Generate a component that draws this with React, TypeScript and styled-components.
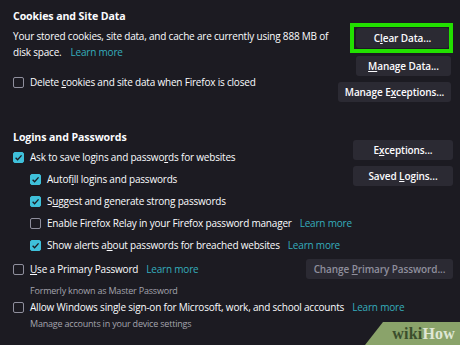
import styled, { createGlobalStyle } from 'styled-components';

const GlobalStyle = createGlobalStyle`
    body {
        margin: 0;
        background-color: #1c1b22;
        font-family: 'Open Sans', 'Noto Sans', sans-serif;
        color: #fbfbfe;
    }
`;

const Page = styled.div`
    position: relative;
    width: 460px;
    height: 345px;
    overflow: hidden;
    padding: 8px 9px 0 13px;
    box-sizing: border-box;
    font-size: 10px;
    letter-spacing: -0.2px;
`;

const Section = styled.div`
    display: flex;
    justify-content: space-between;
    align-items: flex-start;
`;

const Left = styled.div`
    flex: 1;
    min-width: 0;
    display: flex;
    flex-direction: column;
`;

const Title = styled.h2`
    margin: 0;
    font-size: 10.6px;
    font-weight: 700;
    letter-spacing: -0.1px;
    line-height: 17px;
`;

const Desc = styled.p`
    margin: 3px 0 0;
    width: 316px;
    line-height: 16px;
`;

const Link = styled.span<{ $gap?: number }>`
    color: #35adbd;
    margin-left: ${(p) => p.$gap ?? 2}px;
`;

const Buttons = styled.div<{ $top: number; $right?: number }>`
    flex: none;
    display: flex;
    flex-direction: column;
    align-items: flex-end;
    gap: 6px;
    padding-top: ${(p) => p.$top}px;
    margin-right: ${(p) => -(p.$right ?? 0)}px;
`;

const Button = styled.button<{ $w: number; $disabled?: boolean }>`
    width: ${(p) => p.$w}px;
    height: 20px;
    border: none;
    border-radius: 3px;
    background-color: #2b2a33;
    color: ${(p) => (p.$disabled ? '#8f8f9d' : '#fbfbfe')};
    font-family: inherit;
    font-size: 10px;
    font-weight: 600;
    letter-spacing: -0.1px;
    padding: 0;
    u {
        text-underline-offset: 1px;
    }
`;

const Highlight = styled.div`
    border: 4px solid #22e000;
    padding: 1px 0 1px 2px;
    margin-right: -2px;
`;

const Row = styled.label<{ $indent?: boolean; $h: number }>`
    display: flex;
    align-items: center;
    gap: 6px;
    height: ${(p) => p.$h}px;
    padding-left: ${(p) => (p.$indent ? 17 : 0)}px;
    white-space: nowrap;
`;

const Box = styled.span<{ $on?: boolean }>`
    flex: none;
    width: 9px;
    height: 9px;
    border: 1px solid ${(p) => (p.$on ? '#3fc0da' : '#8f8f9d')};
    border-radius: 2px;
    background-color: ${(p) => (p.$on ? '#3fc0da' : 'transparent')};
    display: flex;
    align-items: center;
    justify-content: center;
    svg {
        width: 9px;
        height: 9px;
    }
`;

const Sub = styled.div<{ $h: number }>`
    height: ${(p) => p.$h}px;
    display: flex;
    align-items: center;
    padding-left: 17px;
    color: #a3a3ad;
    font-size: 9px;
`;

const RowWithButton = styled.div`
    display: flex;
    justify-content: space-between;
    align-items: center;
    margin-right: -2px;
`;

const Watermark = styled.div`
    position: absolute;
    right: 0;
    bottom: 0;
    width: 95px;
    height: 23px;
    background-color: #8aa36a;
    clip-path: polygon(18px 0, 100% 0, 100% 100%, 0 100%);
    display: flex;
    align-items: center;
    justify-content: flex-end;
    padding-right: 5px;
    box-sizing: border-box;
    font-family: 'Liberation Serif', serif;
    font-weight: bold;
    font-size: 16px;
    letter-spacing: 0.2px;
`;

const Wiki = styled.span`
    color: #3b4e2c;
`;

const How = styled.span`
    color: #dfe7d5;
`;

function Check({ on }: { on?: boolean }) {
    return (
        <Box $on={on}>
            {on && (
                <svg viewBox="0 0 10 10">
                    <path d="M1.8 5.2 L4 7.4 L8.4 2.6" stroke="#1c1b22" strokeWidth="1.5" fill="none" />
                </svg>
            )}
        </Box>
    );
}

export default function App() {
    return (
        <Page>
            <GlobalStyle />
            <Section>
                <Left>
                    <Title>Cookies and Site Data</Title>
                    <Desc>
                        Your stored cookies, site data, and cache are currently using 888 MB of disk space.
                        <Link $gap={9}>Learn more</Link>
                    </Desc>
                    <Row $h={22} style={{ marginTop: 11 }}>
                        <Check />
                        <span>
                            Delete <u>c</u>ookies and site data when Firefox is closed
                        </span>
                    </Row>
                </Left>
                <Buttons $top={15}>
                    <Highlight>
                        <Button $w={93}>
                            C<u>l</u>ear Data...
                        </Button>
                    </Highlight>
                    <Button $w={95} style={{ marginTop: -3 }}>
                        <u>M</u>anage Data...
                    </Button>
                    <Button $w={113}>
                        Manage E<u>x</u>ceptions...
                    </Button>
                </Buttons>
            </Section>

            <Section style={{ marginTop: 27 }}>
                <Left>
                    <Title>Logins and Passwords</Title>
                    <Row $h={22}>
                        <Check on />
                        <span>
                            Ask to save logins and passwo<u>r</u>ds for websites
                        </span>
                    </Row>
                    <Row $h={22} $indent>
                        <Check on />
                        <span>
                            Autof<u>i</u>ll logins and passwords
                        </span>
                    </Row>
                    <Row $h={22} $indent>
                        <Check on />
                        <span>
                            S<u>u</u>ggest and generate strong passwords
                        </span>
                    </Row>
                    <Row $h={22} $indent>
                        <Check />
                        <span>Enable Firefox Relay in your Firefox password manager</span>
                        <Link>Learn more</Link>
                    </Row>
                    <Row $h={22} $indent>
                        <Check on />
                        <span>
                            Show alerts a<u>b</u>out passwords for breached websites
                        </span>
                        <Link>Learn more</Link>
                    </Row>
                </Left>
                <Buttons $top={11} $right={2}>
                    <Button $w={100}>
                        E<u>x</u>ceptions...
                    </Button>
                    <Button $w={100}>
                        Saved <u>L</u>ogins...
                    </Button>
                </Buttons>
            </Section>

            <RowWithButton>
                <Row $h={26}>
                    <Check />
                    <span>
                        <u>U</u>se a Primary Password
                    </span>
                    <Link>Learn more</Link>
                </Row>
                <Button $w={147} $disabled>
                    Change <u>P</u>rimary Password...
                </Button>
            </RowWithButton>
            <Sub $h={16}>Formerly known as Master Password</Sub>
            <Row $h={18}>
                <Check />
                <span>Allow Windows single sign-on for Microsoft, work, and school accounts</span>
                <Link>Learn more</Link>
            </Row>
            <Sub $h={15}>Manage accounts in your device settings</Sub>

            <Watermark>
                <Wiki>wiki</Wiki>
                <How>How</How>
            </Watermark>
        </Page>
    );
}
